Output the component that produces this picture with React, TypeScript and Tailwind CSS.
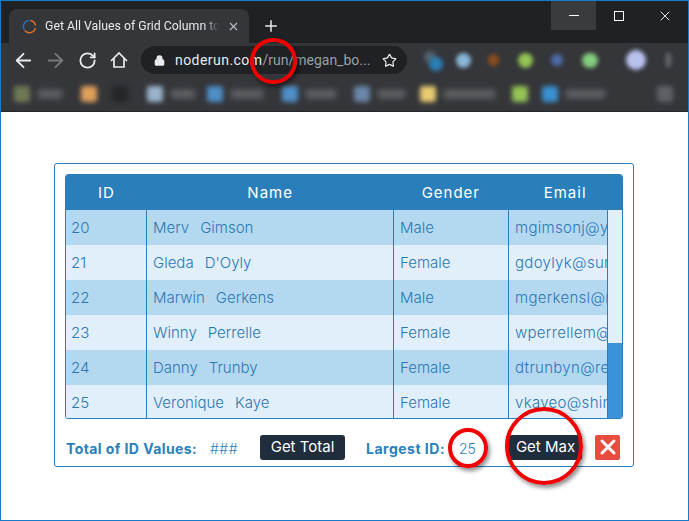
import { ArrowLeft, ArrowRight, RotateCw, Lock, Star, X, Plus } from "lucide-react";

const rows = [
  { id: 20, first: "Merv", last: "Gimson", gender: "Male", email: "mgimsonj@yahoo.com" },
  { id: 21, first: "Gleda", last: "D'Oyly", gender: "Female", email: "gdoylyk@sun.com" },
  { id: 22, first: "Marwin", last: "Gerkens", gender: "Male", email: "mgerkensl@msn.com" },
  { id: 23, first: "Winny", last: "Perrelle", gender: "Female", email: "wperrellem@ft.com" },
  { id: 24, first: "Danny", last: "Trunby", gender: "Female", email: "dtrunbyn@reddit.com" },
  { id: 25, first: "Veronique", last: "Kaye", gender: "Female", email: "vkayeo@shinystat.com" },
];

function Ring({ className }: { className: string }) {
  return (
    <div
      className={`absolute rounded-full border-[4px] border-[#f00000] bg-transparent shadow-[2px_3px_4px_rgba(0,0,0,0.45)] ${className}`}
    />
  );
}

function BookmarkBlur({ color, label, ml }: { color: string; label?: string; ml: string }) {
  return (
    <div className={`flex items-center gap-[8px] shrink-0 ${ml}`}>
      <div className={`w-[16px] h-[16px] rounded-[3px] blur-[2.5px] ${color}`} />
      {label && <div className={`h-[8px] bg-[#636669] blur-[3px] ${label}`} />}
    </div>
  );
}

export default function App() {
  return (
    <div
      className="relative w-[689px] h-[521px] overflow-hidden bg-white border border-[#1979ca]"
      style={{ fontFamily: "Inter, 'Liberation Sans', sans-serif" }}
    >
      {/* tab strip */}
      <div className="h-[42px] bg-[#202124] flex items-end pl-[8px] relative">
        <div className="w-[240px] h-[34px] bg-[#35363a] rounded-t-[8px] flex items-center pl-[13px] pr-[9px]">
          <svg width="15" height="15" viewBox="0 0 16 16" fill="none" className="shrink-0">
            <path d="M8 1.5a6.5 6.5 0 0 0-5.5 10" stroke="#2a6fb5" strokeWidth="1.5" />
            <path d="M2.8 12.2A6.5 6.5 0 0 0 14.3 9.5" stroke="#e0702a" strokeWidth="1.5" />
            <path d="M14.4 7A6.5 6.5 0 0 0 9 1.6" stroke="#e0702a" strokeWidth="1.5" />
          </svg>
          <span
            className="ml-[8px] text-[12.3px] text-[#e8eaed] whitespace-nowrap overflow-hidden w-[181px] [mask-image:linear-gradient(to_right,black_90%,transparent_99%)]"
            style={{ fontFamily: "Roboto, sans-serif" }}
          >
            Get All Values of Grid Column to Get
          </span>
          <X size={13} strokeWidth={2} className="ml-[6px] text-[#bdc1c6] shrink-0" />
        </div>
        <Plus size={18} strokeWidth={2} className="ml-[13px] mb-[8px] text-[#e8eaed]" />
        <div className="ml-auto flex h-[29px] self-start">
          <div className="w-[45px] bg-[#3a3b3d] flex items-center justify-center">
            <div className="w-[10px] h-[1px] bg-white" />
          </div>
          <div className="w-[46px] flex items-center justify-center">
            <div className="w-[10px] h-[10px] border border-white" />
          </div>
          <div className="w-[46px] flex items-center justify-center">
            <X size={16} strokeWidth={1.3} className="text-white" />
          </div>
        </div>
      </div>

      {/* toolbar */}
      <div className="h-[34px] bg-[#35363a] flex items-center pl-[11px] relative">
        <ArrowLeft size={23} strokeWidth={1.9} className="text-[#e8eaed] shrink-0" />
        <ArrowRight size={23} strokeWidth={1.9} className="ml-[9px] text-[#77797c] shrink-0" />
        <RotateCw size={19} strokeWidth={2.3} className="ml-[11px] text-[#e8eaed] shrink-0" />
        <svg width="18" height="18" viewBox="0 0 18 18" fill="none" className="ml-[13px] shrink-0">
          <path d="M1 10 9 2l8 8M4 7.5V16h10V7.5" stroke="#e8eaed" strokeWidth="1.7" />
        </svg>
        <div
          className="ml-[13px] w-[266px] h-[28px] bg-[#202124] rounded-full flex items-center pl-[13px] pr-[10px] text-[14px] whitespace-nowrap shrink-0"
          style={{ fontFamily: "Roboto, sans-serif" }}
        >
          <Lock size={11} strokeWidth={3} className="text-[#e8eaed] fill-[#e8eaed] shrink-0" />
          <span className="ml-[10px] text-[#e8eaed] tracking-[0.45px]">noderun.com</span>
          <span className="text-[#9aa0a6]">/run/megan_bo...</span>
          <Star size={15} strokeWidth={2} className="ml-auto text-[#e8eaed] shrink-0" />
        </div>
        <div className="ml-[14px] relative w-[22px] h-[22px] shrink-0">
          <div className="absolute left-[3px] top-[2px] w-[12px] h-[12px] rounded-full bg-[#4f6470] blur-[2px]" />
          <div className="absolute left-[8px] top-[8px] w-[14px] h-[14px] rounded-full bg-[#2a80b8] blur-[2px]" />
        </div>
        <div className="ml-[13px] w-[15px] h-[15px] rounded-full bg-[#8ab8d8] blur-[2px] shrink-0" />
        <div className="ml-[17px] w-[11px] h-[12px] rounded-full bg-[#8a4d1c] blur-[2px] shrink-0" />
        <div className="ml-[19px] w-[15px] h-[15px] rounded-full bg-[#93c455] blur-[2px] shrink-0" />
        <div className="ml-[18px] w-[12px] h-[12px] rounded-full bg-[#4d6ba8] blur-[2px] shrink-0" />
        <div className="ml-[19px] w-[16px] h-[15px] rounded-full bg-[#84cf80] blur-[2px] shrink-0" />
        <div className="ml-[28px] w-[20px] h-[20px] rounded-full bg-[#b9c2ee] blur-[2px] shrink-0" />
        <div className="ml-[20px] w-[5px] h-[14px] rounded-full bg-[#6a6d70] blur-[2px] shrink-0" />
      </div>

      {/* bookmarks, deliberately blurred in the screenshot */}
      <div className="h-[35px] bg-[#35363a] border-b border-[#24262a] flex items-center pl-[13px] overflow-hidden">
        <BookmarkBlur color="bg-[#6f7a55]" label="w-[24px]" ml="" />
        <BookmarkBlur color="bg-[#e0a05a]" ml="ml-[19px]" />
        <BookmarkBlur color="bg-[#26272a]" ml="ml-[15px]" />
        <BookmarkBlur color="bg-[#9ab4cc]" label="w-[24px]" ml="ml-[19px]" />
        <BookmarkBlur color="bg-[#4f8fc8]" label="w-[32px]" ml="ml-[12px]" />
        <BookmarkBlur color="bg-[#4f8fc8]" label="w-[30px]" ml="ml-[19px]" />
        <BookmarkBlur color="bg-[#6b86a8]" label="w-[27px]" ml="ml-[18px]" />
        <BookmarkBlur color="bg-[#e8cc70]" label="w-[51px]" ml="ml-[15px]" />
        <BookmarkBlur color="bg-[#93c455]" ml="ml-[17px]" />
        <BookmarkBlur color="bg-[#3a90d0]" label="w-[39px]" ml="ml-[14px]" />
        <BookmarkBlur color="bg-[#5e6164]" ml="ml-[52px]" />
      </div>

      {/* page */}
      <div className="pt-[51px] pl-[53px]">
        <div className="w-[580px] h-[304px] border border-[#2a7fba] rounded-[3px] pt-[10px] pl-[10px]">
          <div className="w-[558px] h-[245px] border border-[#2a7fba] rounded-[3px] overflow-hidden bg-[#e1effa] text-[#2a78b5]">
            <div className="h-[35px] pt-[2px] bg-[#2a7fba] flex items-center text-center text-white text-[15px] tracking-[1px]">
              <div className="w-[81px]">ID</div>
              <div className="w-[247px]">Name</div>
              <div className="w-[115px]">Gender</div>
              <div className="w-[114px]">Email</div>
            </div>
            <div className="flex">
              <div className="w-[541px] shrink-0 text-[15px] font-light">
                {rows.map((r, i) => (
                  <div
                    key={r.id}
                    className={`h-[35px] flex items-center ${i % 2 === 0 ? "bg-[#b5d8f1]" : "bg-[#e1effa]"}`}
                  >
                    <div className="w-[81px] h-full flex items-center pl-[5px] pt-[2px] border-r border-[#2a7fba]">{r.id}</div>
                    <div className="w-[247px] h-full flex items-center pl-[6px] pt-[2px] border-r border-[#2a7fba] gap-[11px]">
                      <span>{r.first}</span>
                      <span>{r.last}</span>
                    </div>
                    <div className="w-[115px] h-full flex items-center pl-[6px] pt-[2px] border-r border-[#2a7fba]">{r.gender}</div>
                    <div className="w-[98px] h-full flex items-center pl-[6px] pt-[2px] overflow-hidden whitespace-nowrap tracking-[0.3px]">{r.email}</div>
                  </div>
                ))}
              </div>
              <div className="w-[16px] h-[209px] border-l border-[#2a7fba] bg-[#e1effa] flex flex-col justify-end">
                <div className="h-[76px] bg-[#3a92d8]" />
              </div>
            </div>
          </div>
          <div className="h-[26px] mt-[15px] flex items-center text-[#2a7fba] text-[14px]">
            <span className="ml-[1px] font-bold tracking-[0.42px] w-[144px] mt-[3px] whitespace-nowrap">Total of ID Values:</span>
            <span className="w-[50px] mt-[3px] font-light tracking-[0.5px]">###</span>
            <button className="w-[85px] h-[25px] bg-[#1f2d3d] rounded-[3px] text-white text-[15px]">Get Total</button>
            <span className="ml-[21px] font-bold tracking-[0.5px] w-[84px] mt-[3px] whitespace-nowrap">Largest ID:</span>
            <span className="w-[59px] pl-[9px] mt-[3px] font-light">25</span>
            <button className="w-[73px] h-[25px] bg-[#1f2d3d] rounded-[3px] text-white text-[15px]">Get Max</button>
            <div className="ml-[13px] w-[25px] h-[25px] bg-[#e74c3c] rounded-[2px] flex items-center justify-center">
              <X size={24} strokeWidth={3} className="text-white shrink-0" />
            </div>
          </div>
        </div>
      </div>

      {/* hand-drawn callouts over the page */}
      <Ring className="left-[249px] top-[37px] w-[47px] h-[46px]" />
      <Ring className="left-[447px] top-[427px] w-[40px] h-[40px]" />
      <Ring className="left-[504px] top-[406px] w-[78px] h-[78px]" />
    </div>
  );
}
